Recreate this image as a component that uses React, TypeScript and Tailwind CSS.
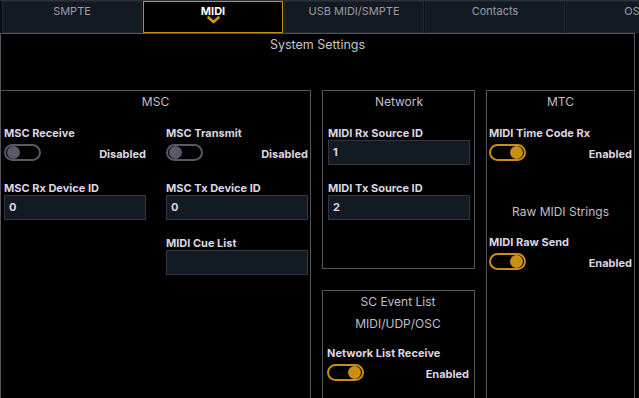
import React from "react";

const tabs = ["SMPTE", "MIDI", "USB MIDI/SMPTE", "Contacts", "OSC"];

function Toggle({ on }: { on: boolean }) {
  return (
    <div
      className={
        on
          ? "flex h-[17px] w-[37px] items-center justify-end rounded-full border-2 border-[#c98f10] px-[1px]"
          : "flex h-[17px] w-[37px] items-center justify-start rounded-full border-2 border-[#5b5766] px-[1px]"
      }
    >
      <div className={on ? "h-[13px] w-[13px] rounded-full bg-[#c98f10]" : "h-[13px] w-[13px] rounded-full bg-[#5c586a]"} />
    </div>
  );
}

function Label({ children }: { children: React.ReactNode }) {
  return <div className="h-[14px] whitespace-nowrap text-[11px] font-bold leading-[14px] text-[#ddd6e2]">{children}</div>;
}

function ToggleField({ label, on, className = "" }: { label: string; on: boolean; className?: string }) {
  return (
    <div className={className}>
      <Label>{label}</Label>
      <div className="mt-[4px] flex items-end justify-between">
        <Toggle on={on} />
        <span className="text-[11px] font-bold leading-[14px] text-[#ddd6e2]">{on ? "Enabled" : "Disabled"}</span>
      </div>
    </div>
  );
}

function InputField({ label, value, className = "" }: { label: string; value: string; className?: string }) {
  return (
    <div className={className}>
      <Label>{label}</Label>
      <div className="flex h-[25px] w-[142px] items-center border border-[#363541] bg-[#121a24] pl-[4px] text-[11px] font-bold text-[#ddd6e2]">
        {value}
      </div>
    </div>
  );
}

function Title({ children }: { children: React.ReactNode }) {
  return <div className="flex h-[22px] items-center justify-center text-[12px] text-[#c3bfc7]">{children}</div>;
}

export default function App() {
  return (
    <div className="h-[398px] w-[639px] overflow-hidden bg-black font-['Inter','Liberation_Sans',sans-serif]">
      <div className="flex h-[33px] gap-[1px] overflow-hidden border-t border-[#2c323b] bg-[#0c1016] pl-[2px]">
        {tabs.map((tab) =>
          tab === "MIDI" ? (
            <div key={tab} className="flex w-[140px] shrink-0 flex-col items-center border border-[#c98f10] bg-black pt-[2px]">
              <span className="text-[11px] font-bold leading-[14px] text-white">{tab}</span>
              <svg width="13" height="8" viewBox="0 0 13 8" className="mt-[-2px]">
                <polyline points="1.5,1.5 6.5,6 11.5,1.5" fill="none" stroke="#d3960f" strokeWidth="2.6" strokeLinecap="round" strokeLinejoin="round" />
              </svg>
            </div>
          ) : (
            <div key={tab} className="flex w-[140px] shrink-0 justify-center border border-[#1e2630] bg-[#131a24] pt-[2px]">
              <span className="text-[11px] leading-[14px] text-[#9c9ca6]">{tab}</span>
            </div>
          )
        )}
      </div>

      <div className="h-[400px] w-[635px] border-x border-t border-[#56545c]">
        <div className="pt-[4px] text-center text-[12.5px] leading-[14px] text-[#c8c4cc]">System Settings</div>

        <div className="-mx-px mt-[38px] flex">
          {/* MSC */}
          <div className="h-[320px] w-[311px] shrink-0 border border-[#56545c]">
            <Title>MSC</Title>
            <div className="mt-[13px] grid grid-cols-[142px_142px] gap-x-[20px] pl-[3px]">
              <div>
                <ToggleField label="MSC Receive" on={false} />
                <InputField className="mt-[20px]" label="MSC Rx Device ID" value="0" />
              </div>
              <div>
                <ToggleField label="MSC Transmit" on={false} />
                <InputField className="mt-[20px]" label="MSC Tx Device ID" value="0" />
                <InputField className="mt-[16px]" label="MIDI Cue List" value="" />
              </div>
            </div>
          </div>

          {/* Network + SC Event List */}
          <div className="ml-[11px] w-[153px] shrink-0">
            <div className="h-[179px] border border-[#56545c] pl-[5px] pr-[4px]">
              <Title>Network</Title>
              <InputField className="mt-[13px]" label="MIDI Rx Source ID" value="1" />
              <InputField className="mt-[16px]" label="MIDI Tx Source ID" value="2" />
            </div>
            <div className="mt-[21px] h-[200px] border border-[#56545c] pl-[4px] pr-[5px]">
              <Title>SC Event List</Title>
              <Title>MIDI/UDP/OSC</Title>
              <ToggleField className="mt-[11px]" label="Network List Receive" on={true} />
            </div>
          </div>

          {/* MTC */}
          <div className="ml-[11px] h-[320px] w-[149px] shrink-0 border border-[#56545c] px-[2px]">
            <Title>MTC</Title>
            <ToggleField className="mt-[13px]" label="MIDI Time Code Rx" on={true} />
            <div className="mt-[40px]">
              <Title>Raw MIDI Strings</Title>
            </div>
            <ToggleField className="mt-[12px]" label="MIDI Raw Send" on={true} />
          </div>
        </div>
      </div>
    </div>
  );
}
